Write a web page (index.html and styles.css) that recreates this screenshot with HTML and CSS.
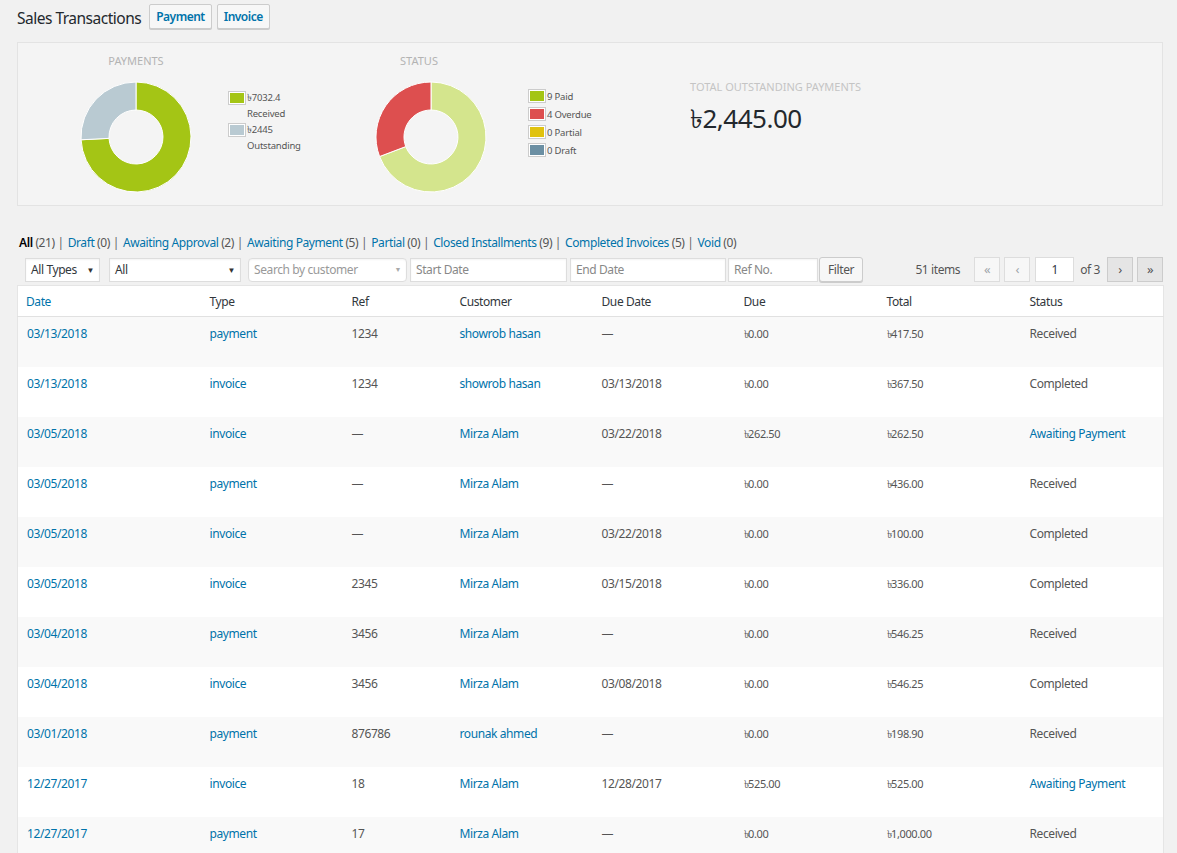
FILE: index.html
```html
<!DOCTYPE html>
<html>
<head>
<meta charset="utf-8">
<link rel="stylesheet" href="styles.css">
</head>
<body>
<div class="wrap">
  <div class="head">
    <h1 class="title">Sales Transactions</h1>
    <a class="head-btn" href="#">Payment</a>
    <a class="head-btn" href="#">Invoice</a>
  </div>

  <div class="stats">
    <div class="panel panel-pay">
      <div class="donut-col">
        <div class="chart-title">PAYMENTS</div>
        <svg class="donut" width="112" height="112" viewBox="0 0 112 112">
          <path d="M56,1 A55,55 0 1 1 1.07,58.78 L29.03,57.37 A27,27 0 1 0 56,29 Z" fill="#a4c515" stroke="#fff" stroke-width="1"/>
          <path d="M1.07,58.78 A55,55 0 0 1 56,1 L56,29 A27,27 0 0 0 29.03,57.37 Z" fill="#b9cad2" stroke="#fff" stroke-width="1"/>
        </svg>
      </div>
      <ul class="legend legend-pay">
        <li><span class="sw"><i class="c-green"></i></span><span class="lt">৳7032.4<br>Received</span></li>
        <li><span class="sw"><i class="c-gray"></i></span><span class="lt">৳2445<br>Outstanding</span></li>
      </ul>
    </div>

    <div class="panel panel-status">
      <div class="donut-col">
        <div class="chart-title chart-title-status">STATUS</div>
        <svg class="donut" width="112" height="112" viewBox="0 0 112 112">
          <path d="M56,1 A55,55 0 1 1 4.57,75.53 L30.75,65.59 A27,27 0 1 0 56,29 Z" fill="#d4e58d" stroke="#fff" stroke-width="1"/>
          <path d="M4.57,75.53 A55,55 0 0 1 56,1 L56,29 A27,27 0 0 0 30.75,65.59 Z" fill="#dd4f4f" stroke="#fff" stroke-width="1"/>
        </svg>
      </div>
      <ul class="legend legend-status">
        <li><span class="sw"><i class="c-green"></i></span><span class="lt">9 Paid</span></li>
        <li><span class="sw"><i class="c-red"></i></span><span class="lt">4 Overdue</span></li>
        <li><span class="sw"><i class="c-yellow"></i></span><span class="lt">0 Partial</span></li>
        <li><span class="sw"><i class="c-slate"></i></span><span class="lt">0 Draft</span></li>
      </ul>
    </div>

    <div class="panel panel-total">
      <div class="total-label">TOTAL OUTSTANDING PAYMENTS</div>
      <div class="total-value">৳2,445.00</div>
    </div>
  </div>

  <ul class="subsubsub">
    <li><a class="current" href="#">All</a> <span class="count">(21)</span> |</li>
    <li><a href="#">Draft <span class="count">(0)</span></a> |</li>
    <li><a href="#">Awaiting Approval <span class="count">(2)</span></a> |</li>
    <li><a href="#">Awaiting Payment <span class="count">(5)</span></a> |</li>
    <li><a href="#">Partial <span class="count">(0)</span></a> |</li>
    <li><a href="#">Closed Installments <span class="count">(9)</span></a> |</li>
    <li><a href="#">Completed Invoices <span class="count">(5)</span></a> |</li>
    <li><a href="#">Void <span class="count">(0)</span></a></li>
  </ul>

  <div class="tablenav">
    <div class="filters">
      <div class="sel sel-types">All Types <span class="arr">▼</span></div>
      <div class="sel sel-all">All <span class="arr">▼</span></div>
      <div class="sel sel-search"><span class="ph">Search by customer</span> <span class="arr arr-light">▼</span></div>
      <div class="inp inp-start">Start Date</div>
      <div class="inp inp-end">End Date</div>
      <div class="inp inp-ref">Ref No.</div>
      <div class="btn-filter">Filter</div>
    </div>
    <div class="pages">
      <span class="items">51 items</span>
      <span class="pbtn disabled">«</span>
      <span class="pbtn disabled">‹</span>
      <span class="pinput">1</span>
      <span class="of">of 3</span>
      <span class="pbtn">›</span>
      <span class="pbtn">»</span>
    </div>
  </div>

  <table class="list">
    <colgroup>
      <col class="w-date"><col class="w-type"><col class="w-ref"><col class="w-cust"><col class="w-ddate"><col class="w-due"><col class="w-total"><col class="w-status">
    </colgroup>
    <thead>
      <tr><th class="sortable"><a href="#">Date</a></th><th>Type</th><th>Ref</th><th>Customer</th><th>Due Date</th><th>Due</th><th>Total</th><th>Status</th></tr>
    </thead>
    <tbody>
      <tr><td><a href="#">03/13/2018</a></td><td><a href="#">payment</a></td><td>1234</td><td><a href="#">showrob hasan</a></td><td>—</td><td class="m">৳0.00</td><td class="m">৳417.50</td><td>Received</td></tr>
      <tr><td><a href="#">03/13/2018</a></td><td><a href="#">invoice</a></td><td>1234</td><td><a href="#">showrob hasan</a></td><td>03/13/2018</td><td class="m">৳0.00</td><td class="m">৳367.50</td><td>Completed</td></tr>
      <tr><td><a href="#">03/05/2018</a></td><td><a href="#">invoice</a></td><td>—</td><td><a href="#">Mirza Alam</a></td><td>03/22/2018</td><td class="m">৳262.50</td><td class="m">৳262.50</td><td><a href="#">Awaiting Payment</a></td></tr>
      <tr><td><a href="#">03/05/2018</a></td><td><a href="#">payment</a></td><td>—</td><td><a href="#">Mirza Alam</a></td><td>—</td><td class="m">৳0.00</td><td class="m">৳436.00</td><td>Received</td></tr>
      <tr><td><a href="#">03/05/2018</a></td><td><a href="#">invoice</a></td><td>—</td><td><a href="#">Mirza Alam</a></td><td>03/22/2018</td><td class="m">৳0.00</td><td class="m">৳100.00</td><td>Completed</td></tr>
      <tr><td><a href="#">03/05/2018</a></td><td><a href="#">invoice</a></td><td>2345</td><td><a href="#">Mirza Alam</a></td><td>03/15/2018</td><td class="m">৳0.00</td><td class="m">৳336.00</td><td>Completed</td></tr>
      <tr><td><a href="#">03/04/2018</a></td><td><a href="#">payment</a></td><td>3456</td><td><a href="#">Mirza Alam</a></td><td>—</td><td class="m">৳0.00</td><td class="m">৳546.25</td><td>Received</td></tr>
      <tr><td><a href="#">03/04/2018</a></td><td><a href="#">invoice</a></td><td>3456</td><td><a href="#">Mirza Alam</a></td><td>03/08/2018</td><td class="m">৳0.00</td><td class="m">৳546.25</td><td>Completed</td></tr>
      <tr><td><a href="#">03/01/2018</a></td><td><a href="#">payment</a></td><td>876786</td><td><a href="#">rounak ahmed</a></td><td>—</td><td class="m">৳0.00</td><td class="m">৳198.90</td><td>Received</td></tr>
      <tr><td><a href="#">12/27/2017</a></td><td><a href="#">invoice</a></td><td>18</td><td><a href="#">Mirza Alam</a></td><td>12/28/2017</td><td class="m">৳525.00</td><td class="m">৳525.00</td><td><a href="#">Awaiting Payment</a></td></tr>
      <tr><td><a href="#">12/27/2017</a></td><td><a href="#">payment</a></td><td>17</td><td><a href="#">Mirza Alam</a></td><td>—</td><td class="m">৳0.00</td><td class="m">৳1,000.00</td><td>Received</td></tr>
    </tbody>
  </table>
</div>
</body>
</html>
```

FILE: styles.css
```css
* { box-sizing: border-box; }
html, body { margin: 0; padding: 0; }
body {
  background: #f1f1f1;
  font-family: "Noto Sans", "Open Sans", sans-serif;
  font-size: 12px;
  letter-spacing: -0.4px;
  color: #32373c;
  overflow: hidden;
}
a { color: #0073aa; text-decoration: none; }
.wrap { padding: 0 14px 0 17px; }

.head { display: flex; align-items: center; height: 35px; }
.title { font-size: 15.5px; font-weight: 400; color: #23282d; margin: 2px 8px 0 0; line-height: 1; letter-spacing: -0.5px; }
.head-btn {
  display: inline-block; height: 25px; line-height: 23px; padding: 0 6px;
  border: 1px solid #ccc; background: #f7f7f7; border-radius: 2px;
  font-size: 12px; font-weight: 600; margin-right: 5px; margin-top: -2px;
  box-shadow: 0 1px 0 #ccc; letter-spacing: -0.5px;
}

.stats {
  margin-top: 7px;
  height: 164px;
  background: #f4f4f4;
  border: 1px solid #e3e3e3;
  display: flex;
  padding-left: 62px;
}
.panel { display: flex; }
.panel-pay { width: 295px; }
.panel-status { width: 315px; }
.donut-col { width: 112px; display: flex; flex-direction: column; align-items: center; }
.chart-title { font-size: 11px; color: #b3b3b3; margin-top: 11px; line-height: 14px; height: 14px; letter-spacing: 0; }
.chart-title-status { margin-right: 24px; }
.donut { display: block; margin-top: 13px; }
.legend { list-style: none; margin: 0; padding: 0; font-size: 9.5px; color: #555; letter-spacing: -0.2px; }
.legend-pay { margin-left: 36px; margin-top: 47px; }
.legend-status { margin-left: 41px; margin-top: 45px; }
.legend li { display: flex; align-items: flex-start; line-height: 16.5px; }
.legend-pay li { line-height: 16px; }
.legend-status li { height: 18px; line-height: 17px; }
.sw { display: inline-block; border: 1px solid #ccc; padding: 1px; margin-top: 1px; margin-right: 1px; width: 18px; height: 14px; background: #fff; flex: none; }
.sw i { display: block; width: 14px; height: 10px; }
.c-green { background: #a4c515; }
.c-gray { background: #b9cad2; }
.c-red { background: #dd4f4f; }
.c-yellow { background: #e0c20f; }
.c-slate { background: #6b8fa3; }

.panel-total { flex-direction: column; padding-top: 37px; }
.total-label { font-size: 11px; color: #c4c4c4; line-height: 14px; letter-spacing: 0; }
.total-value { font-size: 26px; color: #23282d; margin-top: 8px; line-height: 32px; letter-spacing: -0.5px; }

.subsubsub { list-style: none; margin: 30px 0 0 2px; padding: 0; display: flex; font-size: 12px; color: #666; line-height: 14px; }
.subsubsub li { margin-right: 4px; white-space: pre; }
.subsubsub .current { color: #000; font-weight: 600; }
.subsubsub .count { color: #555; }

.tablenav { display: flex; justify-content: space-between; align-items: center; margin-top: 7px; height: 25px; padding-left: 8px; }
.filters { display: flex; align-items: center; }
.sel, .inp {
  height: 24px; line-height: 22px; border: 1px solid #ddd; background: #fff;
  font-size: 12px; color: #32373c; padding: 0 5px; margin-right: 3px;
  box-shadow: inset 0 1px 2px rgba(0,0,0,0.05);
  display: flex; justify-content: space-between; align-items: center;
}
.arr { font-size: 8px; color: #333; }
.arr-light { color: #aaa; font-size: 7px; }
.sel-types { width: 75px; margin-right: 9px; }
.sel-all { width: 132px; margin-right: 7px; }
.sel-search { width: 159px; border-radius: 4px; margin-right: 3px; }
.sel-search .ph { color: #999; }
.inp { color: #888; }
.inp-start { width: 157px; }
.inp-end { width: 156px; margin-right: 2px; }
.inp-ref { width: 90px; margin-right: 1px; }
.btn-filter {
  height: 25px; line-height: 23px; padding: 0 8px; border: 1px solid #ccc; background: #f7f7f7;
  border-radius: 3px; box-shadow: 0 1px 0 #ccc; color: #555; font-size: 12px;
}
.pages { display: flex; align-items: center; color: #555; font-size: 12px; }
.items { margin-right: 10px; }
.pbtn {
  display: inline-block; width: 26px; height: 25px; line-height: 23px; text-align: center;
  border: 1px solid #ccc; background: #e5e5e5; color: #555; font-size: 13px; margin-left: 4px;
}
.pbtn.disabled { background: #f7f7f7; border-color: #ddd; color: #a0a5aa; }
.pinput { display: inline-block; width: 39px; height: 25px; line-height: 23px; text-align: center; background: #fff; border: 1px solid #ddd; margin-left: 5px; color: #32373c; }
.of { margin: 0 3px 0 6px; }

.list {
  margin-top: 3px;
  width: 1146px;
  table-layout: fixed;
  border-collapse: collapse;
  background: #fff;
  border: 1px solid #e5e5e5;
}
.w-date { width: 184px; } .w-type { width: 142px; } .w-ref { width: 108px; } .w-cust { width: 142px; }
.w-ddate { width: 142px; } .w-due { width: 143px; } .w-total { width: 143px; } .w-status { width: 142px; }
.list th {
  text-align: left; font-weight: 400; font-size: 12px; color: #32373c;
  height: 31px; padding: 0 8px; border-bottom: 1px solid #e1e1e1;
}
.list td {
  height: 50px; vertical-align: top; padding: 8px 8px 0 8px; font-size: 12px; color: #555; line-height: 18px;
}
.list td:first-child { padding-left: 9px; }
.list td.m { font-size: 11px; letter-spacing: -0.4px; }
.list tbody tr:nth-child(odd) { background: #f9f9f9; }
```
